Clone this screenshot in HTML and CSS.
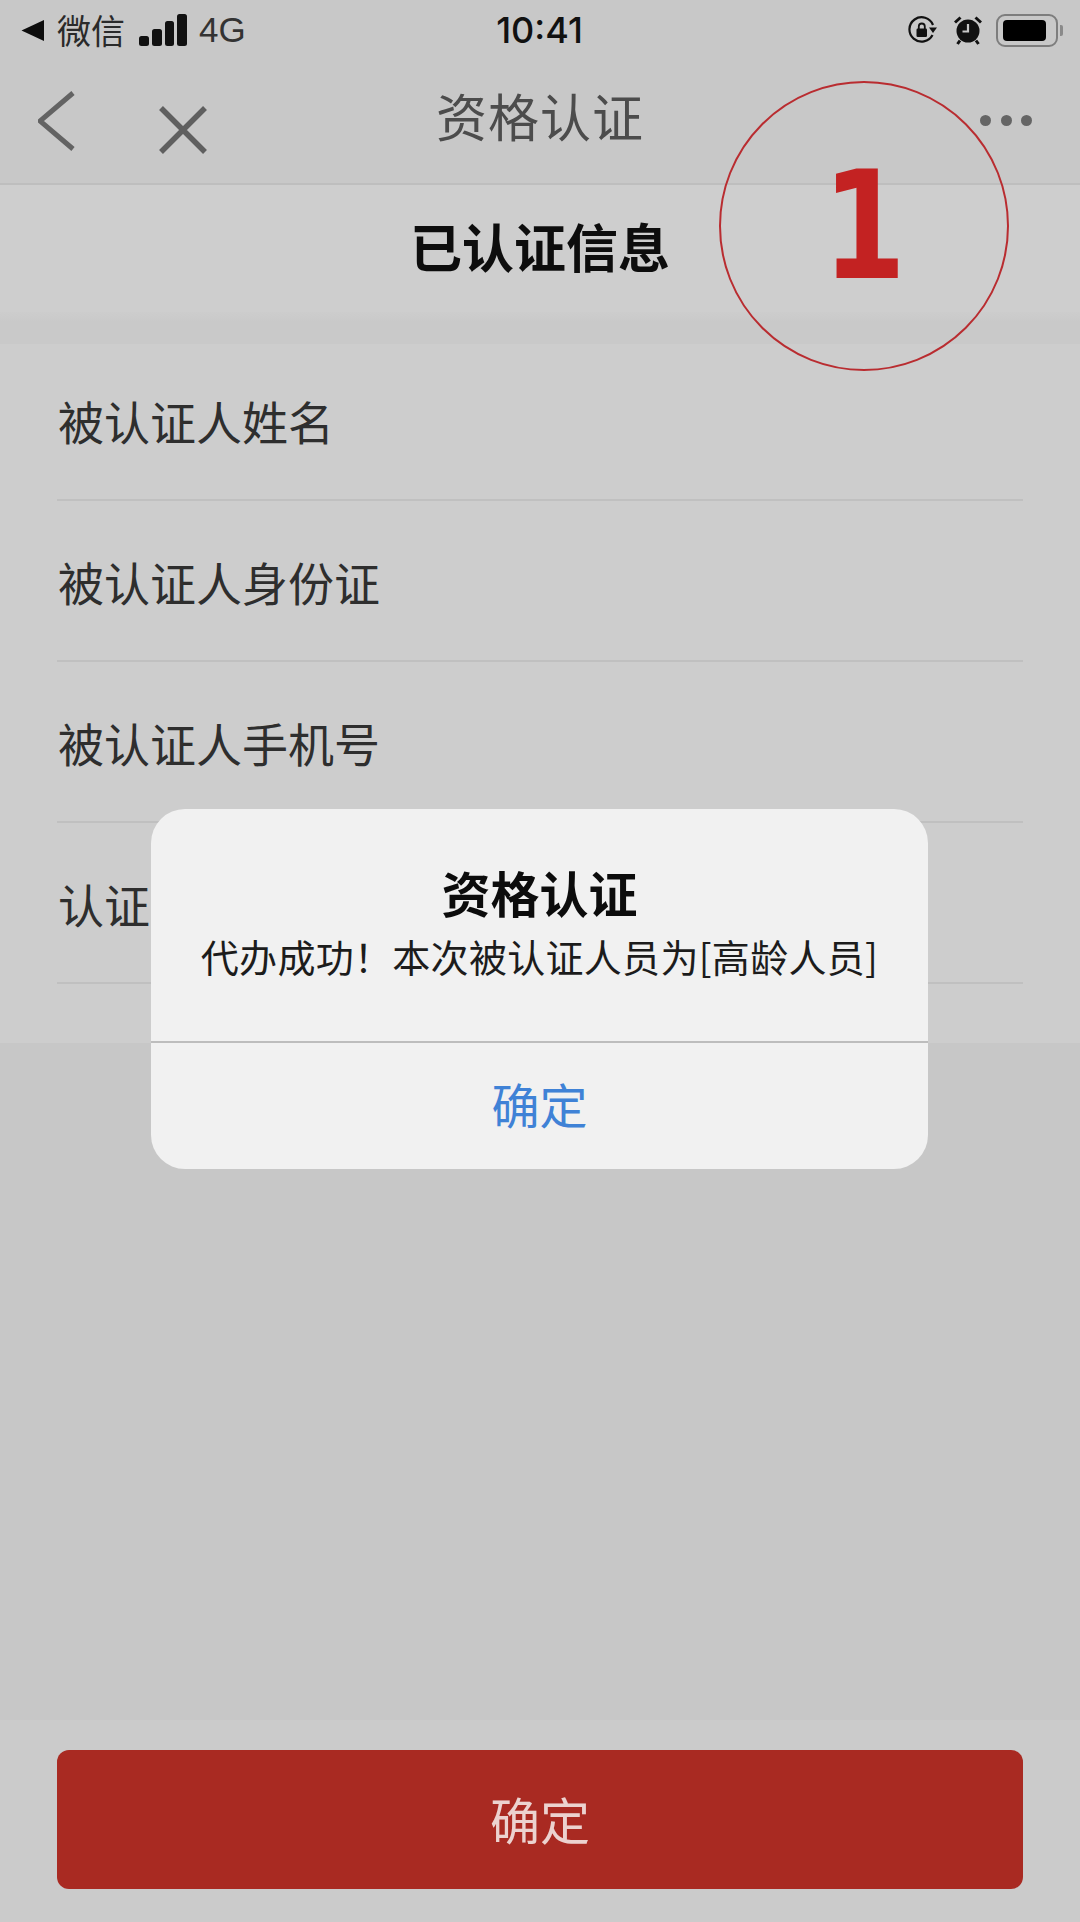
FILE: index.html
```html
<!DOCTYPE html>
<html>
<head>
	<meta charset="utf-8">
	<title>资格认证</title>
	<link rel="stylesheet" href="styles.css">
</head>
<body>
<div class="page">
	<div class="status">
		<div class="status-side">
			<svg class="s-back" width="24" height="23" viewBox="0 0 24 23"><path d="M0.500 11.500 23 1V22Z" fill="#0d0d0d"/></svg>
			<span class="s-app">微信</span>
			<svg class="s-signal" width="48" height="32" viewBox="0 0 48 32"><rect x="0" y="22" width="10" height="10" rx="2.500"/><rect x="13" y="15" width="10" height="17" rx="2.500"/><rect x="26" y="7" width="9" height="25" rx="2.500"/><rect x="38" y="0" width="10" height="32" rx="2.500"/></svg>
			<span class="s-net">4G</span>
		</div>
		<div class="s-time">10:41</div>
		<div class="status-side status-right">
			<svg class="s-lock" width="30" height="30" viewBox="0 0 30 30"><path d="M25.500 20A12.200 12.200 0 1 1 26 10" fill="none" stroke="#111" stroke-width="2.200"/><path d="M22 12.500h8L26 18Z" fill="#111"/><rect x="9.500" y="13.500" width="10.500" height="8.500" rx="1.200" fill="#111"/><path d="M11.800 14V11.500a3 3 0 0 1 6 0V14" fill="none" stroke="#111" stroke-width="1.800"/></svg>
			<svg class="s-alarm" width="28" height="30" viewBox="0 0 28 30"><circle cx="14" cy="16" r="11.500" fill="#111"/><path d="M14 9V16.500H8.500" fill="none" stroke="#c8c8c8" stroke-width="2.200"/><path d="M1 7.500 6.500 2.500M27 7.500 21.500 2.500M6 25.500 3.500 29M22 25.500 24.500 29" fill="none" stroke="#111" stroke-width="3"/></svg>
			<div class="battery"><div class="battery-fill"></div></div>
		</div>
	</div>

	<div class="nav">
		<div class="nav-left">
			<svg class="nav-back" width="37" height="62" viewBox="0 0 37 62"><path d="M35 3 2 31 35 59" fill="none" stroke="#636363" stroke-width="5"/></svg>
			<svg class="nav-close" width="52" height="52" viewBox="0 0 52 52"><path d="M4 4 48 48M48 4 4 48" fill="none" stroke="#5f5f5f" stroke-width="5.500"/></svg>
		</div>
		<div class="nav-title">资格认证</div>
		<div class="nav-more"><i></i><i></i><i></i></div>
	</div>

	<div class="section-head">已认证信息</div>
	<div class="band"></div>

	<div class="form">
		<div class="row">被认证人姓名</div>
		<div class="row">被认证人身份证</div>
		<div class="row">被认证人手机号</div>
		<div class="row">认证类型</div>
	</div>

	<div class="empty"></div>

	<div class="bottom">
		<div class="submit">确定</div>
	</div>

	<div class="dialog">
		<div class="dialog-body">
			<div class="dialog-title">资格认证</div>
			<div class="dialog-msg">代办成功！本次被认证人员为[高龄人员]</div>
		</div>
		<div class="dialog-btn">确定</div>
	</div>

	<div class="marker"><span class="marker-num">1</span></div>
</div>
</body>
</html>
```

FILE: styles.css
```css
* {
	margin: 0;
	padding: 0;
	box-sizing: border-box;
}
body {
	width: 1080px;
	height: 1922px;
	overflow: hidden;
	font-family: "Noto Sans CJK SC", "Liberation Sans", sans-serif;
	background: #c7c7c7;
}
.page {
	position: relative;
	width: 1080px;
	height: 1922px;
	display: flex;
	flex-direction: column;
}

/* status bar */
.status {
	height: 60px;
	padding: 0 22px 0 21px;
	display: grid;
	grid-template-columns: 1fr auto 1fr;
	align-items: center;
	background: #c8c8c8;
	color: #141414;
}
.status-side {
	display: flex;
	align-items: center;
}
.status-right {
	justify-content: flex-end;
}
.s-app {
	margin-left: 12px;
	font-size: 34px;
	line-height: 40px;
	color: #2a2a2a;
}
.s-signal {
	margin-left: 14px;
	fill: #111;
}
.s-net {
	margin-left: 12px;
	font-family: "Liberation Sans", sans-serif;
	font-size: 35px;
	color: #333;
}
.s-time {
	font-family: "Inter", "Liberation Sans", sans-serif;
	font-size: 36px;
	font-weight: 500;
	color: #111;
}
.s-alarm {
	margin-left: 17px;
}
.battery {
	position: relative;
	width: 62px;
	height: 33px;
	margin-left: 14px;
	padding: 4px 5px;
	border: 2px solid #7d7d7d;
	border-radius: 9px;
}
.battery-fill {
	width: 43px;
	height: 100%;
	background: #000;
	border-radius: 4px;
}
.battery::after {
	content: "";
	position: absolute;
	right: -7px;
	top: 9px;
	width: 3px;
	height: 11px;
	background: #8a8a8a;
	border-radius: 0 2px 2px 0;
}

/* nav */
.nav {
	height: 125px;
	padding: 0 38px;
	display: grid;
	grid-template-columns: 1fr auto 1fr;
	align-items: center;
	background: #c8c8c8;
	border-bottom: 2px solid #bebebe;
}
.nav-left {
	display: flex;
	align-items: center;
	gap: 82px;
}
.nav-close {
	margin-top: 16px;
}
.nav-back {
	margin-bottom: 1px;
}
.nav-title {
	margin-bottom: 14px;
	font-size: 51px;
	line-height: 70px;
	letter-spacing: 1px;
	color: #4c4c4c;
}
.nav-more {
	display: flex;
	justify-content: flex-end;
	gap: 9.500px;
	margin-bottom: 2px;
	padding-right: 10px;
}
.nav-more i {
	width: 11px;
	height: 11px;
	border-radius: 50%;
	background: #656565;
}

.section-head {
	height: 127px;
	padding-bottom: 6px;
	display: flex;
	align-items: center;
	justify-content: center;
	font-size: 52px;
	font-weight: 700;
	color: #0d0d0d;
	background: #cecece;
}
.band {
	height: 32px;
	background: linear-gradient(#cdcdcd, #c9c9c9 30%);
}

/* form rows */
.form {
	height: 699px;
	padding: 0 57px;
	background: #cdcdcd;
}
.row {
	height: 161px;
	padding-left: 1px;
	display: flex;
	align-items: center;
	font-size: 46px;
	color: #2e2e2e;
	border-bottom: 2px solid #c0c0c0;
}
.row:first-child {
	height: 157px;
	padding-bottom: 4px;
}

.empty {
	flex: 1;
	background: #c7c7c7;
}

.bottom {
	height: 202px;
	padding: 30px 57px 33px;
	background: #cbcbcb;
}
.submit {
	height: 100%;
	padding-bottom: 4px;
	display: flex;
	align-items: center;
	justify-content: center;
	font-size: 50px;
	color: #ecd2cf;
	background: #a92a22;
	border-radius: 12px;
}

/* dialog on top of everything */
.dialog {
	position: absolute;
	left: 151px;
	top: 809px;
	width: 777px;
	height: 360px;
	display: flex;
	flex-direction: column;
	background: #f1f1f1;
	border-radius: 34px;
}
.dialog-body {
	height: 234px;
	padding-top: 48px;
	text-align: center;
	border-bottom: 2px solid #bdbdbd;
}
.dialog-title {
	font-size: 49px;
	line-height: 70px;
	font-weight: 700;
	color: #0c0c0c;
}
.dialog-msg {
	margin-top: 4px;
	font-size: 38px;
	line-height: 50px;
	letter-spacing: 0.300px;
	color: #1c1c1c;
}
.dialog-btn {
	flex: 1;
	padding-bottom: 7px;
	display: flex;
	align-items: center;
	justify-content: center;
	font-size: 48px;
	color: #3f82d6;
}

/* red annotation */
.marker {
	position: absolute;
	left: 719px;
	top: 81px;
	width: 290px;
	height: 290px;
	display: flex;
	align-items: center;
	justify-content: center;
	font-family: "DejaVu Sans", sans-serif;
	font-size: 150px;
	font-weight: 700;
	color: #c32222;
	border: 2px solid #b92c30;
	border-radius: 50%;
}
.marker-num {
	display: inline-block;
	transform: scaleX(0.8);
}
```
